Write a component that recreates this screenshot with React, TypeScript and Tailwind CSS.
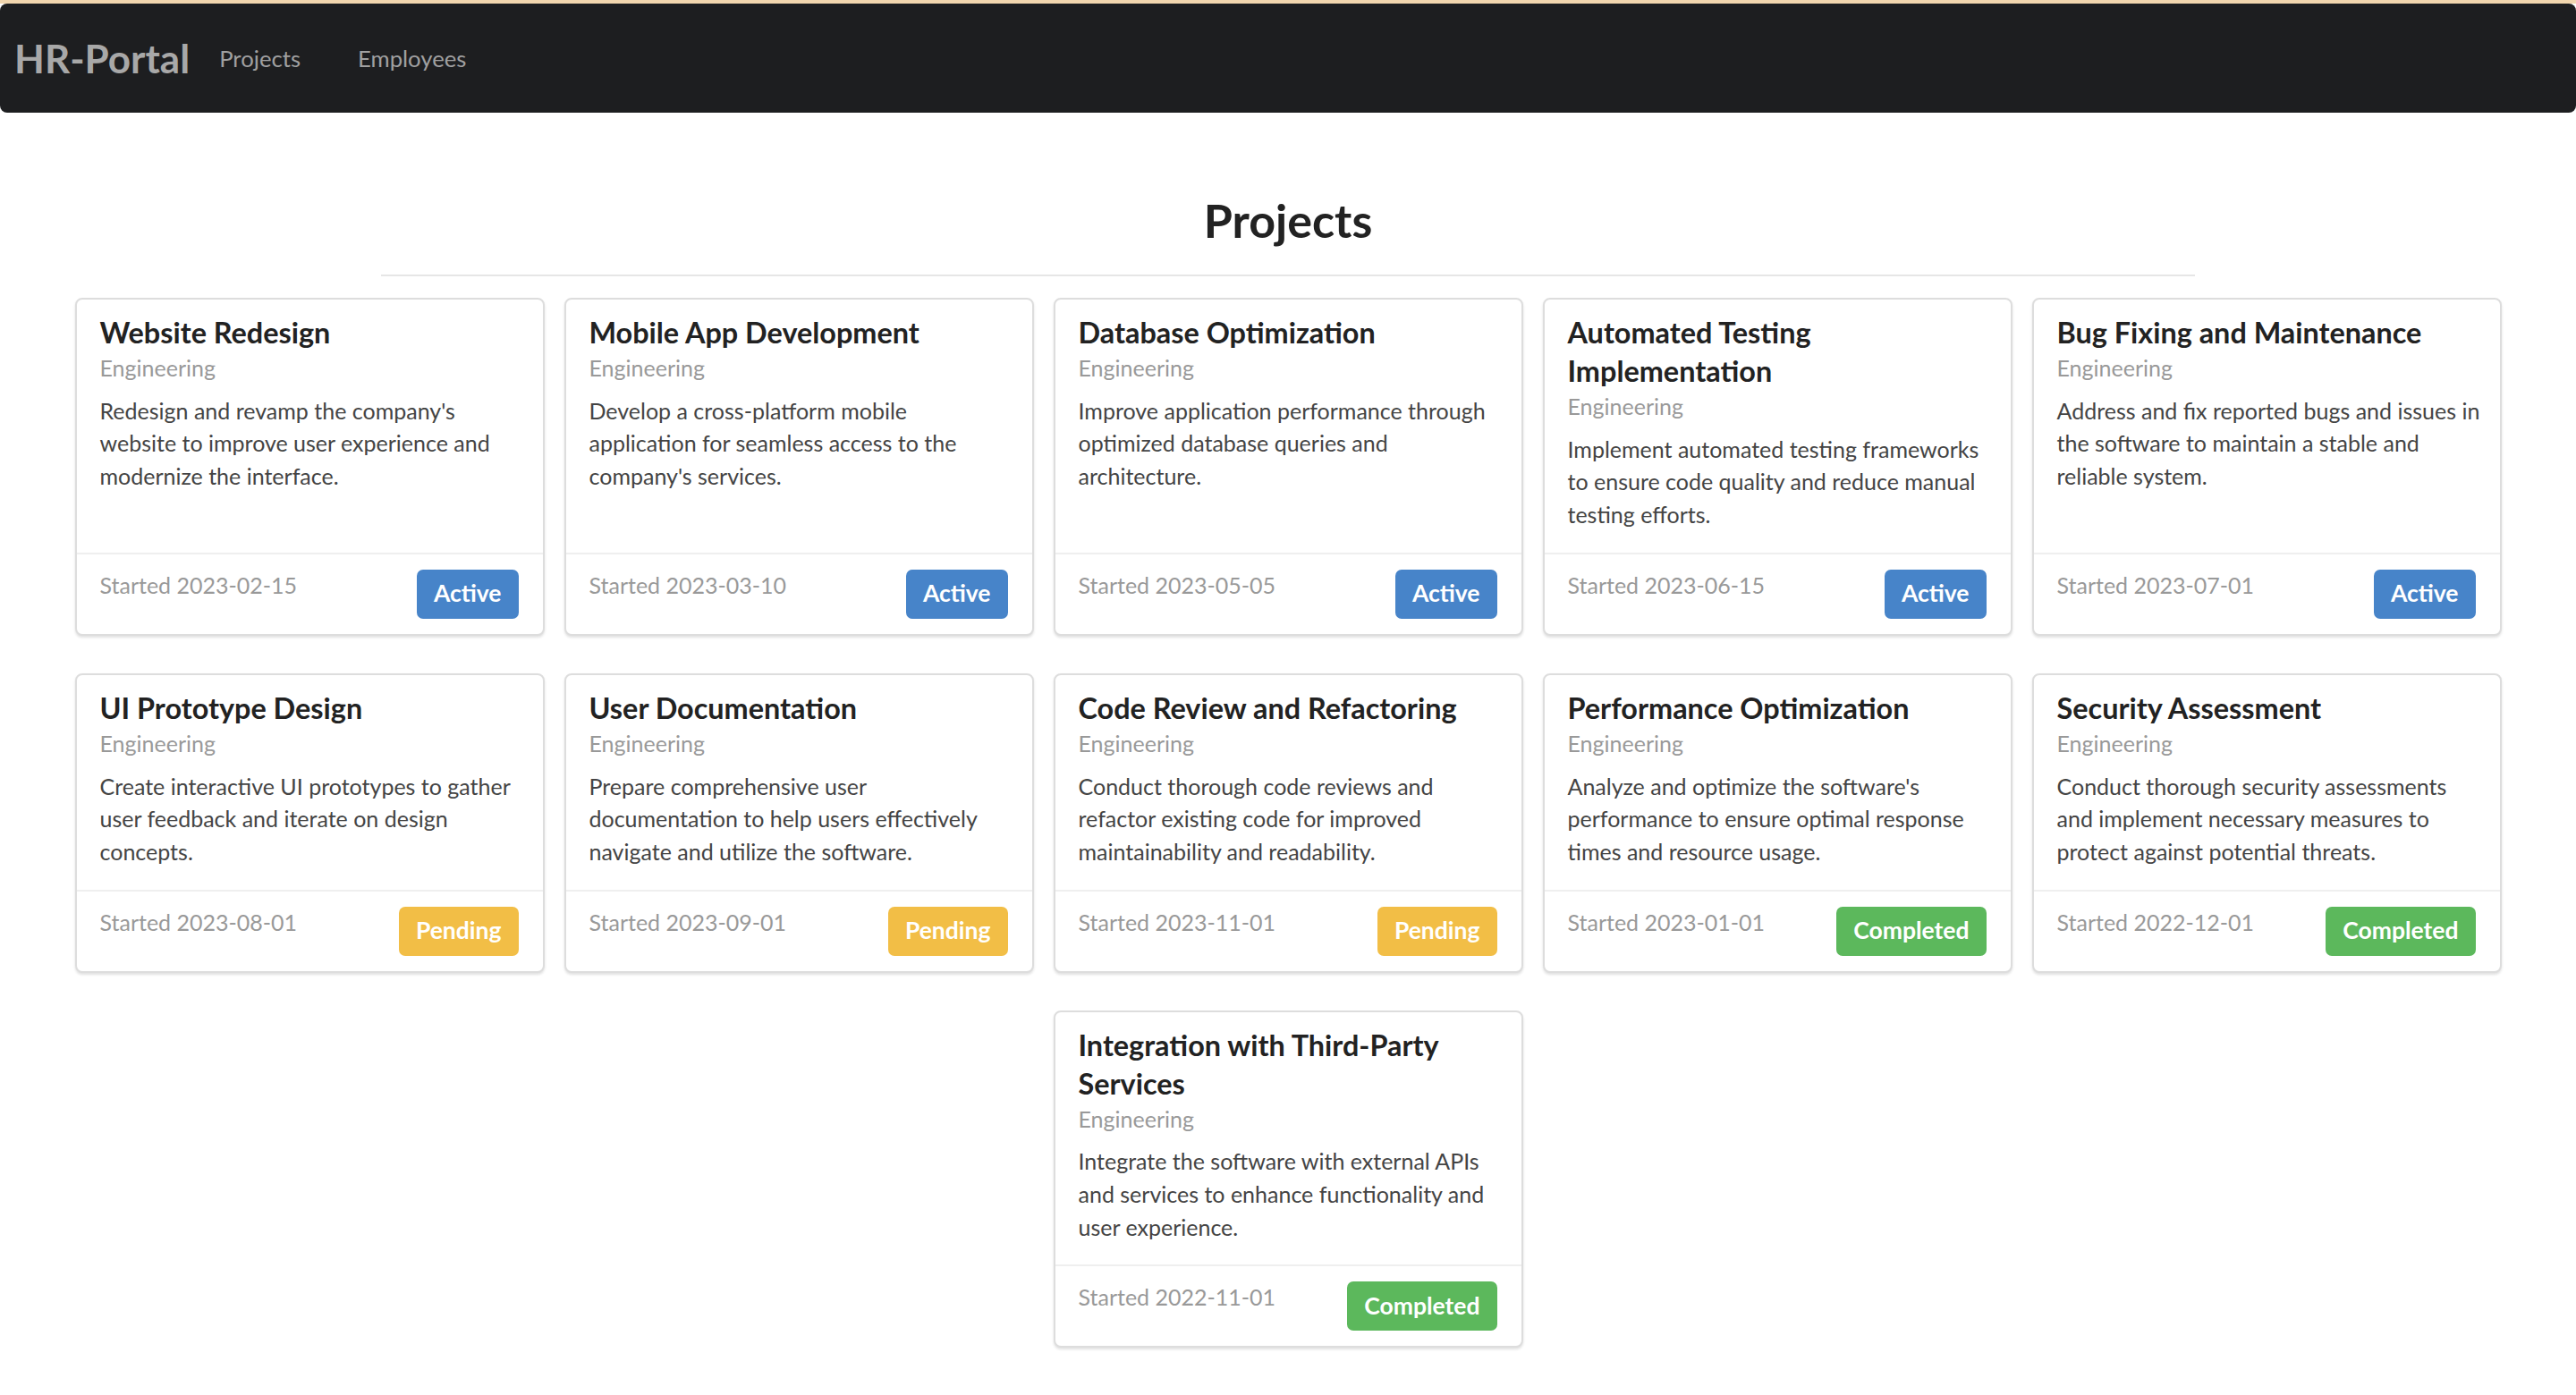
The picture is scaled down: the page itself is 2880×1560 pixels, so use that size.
const projects = [
  { title: "Website Redesign", desc: "Redesign and revamp the company's website to improve user experience and modernize the interface.", started: "2023-02-15", status: "Active" },
  { title: "Mobile App Development", desc: "Develop a cross-platform mobile application for seamless access to the company's services.", started: "2023-03-10", status: "Active" },
  { title: "Database Optimization", desc: "Improve application performance through optimized database queries and architecture.", started: "2023-05-05", status: "Active" },
  { title: "Automated Testing Implementation", desc: "Implement automated testing frameworks to ensure code quality and reduce manual testing efforts.", started: "2023-06-15", status: "Active" },
  { title: "Bug Fixing and Maintenance", desc: "Address and fix reported bugs and issues in the software to maintain a stable and reliable system.", started: "2023-07-01", status: "Active" },
  { title: "UI Prototype Design", desc: "Create interactive UI prototypes to gather user feedback and iterate on design concepts.", started: "2023-08-01", status: "Pending" },
  { title: "User Documentation", desc: "Prepare comprehensive user documentation to help users effectively navigate and utilize the software.", started: "2023-09-01", status: "Pending" },
  { title: "Code Review and Refactoring", desc: "Conduct thorough code reviews and refactor existing code for improved maintainability and readability.", started: "2023-11-01", status: "Pending" },
  { title: "Performance Optimization", desc: "Analyze and optimize the software's performance to ensure optimal response times and resource usage.", started: "2023-01-01", status: "Completed" },
  { title: "Security Assessment", desc: "Conduct thorough security assessments and implement necessary measures to protect against potential threats.", started: "2022-12-01", status: "Completed" },
  { title: "Integration with Third-Party Services", desc: "Integrate the software with external APIs and services to enhance functionality and user experience.", started: "2022-11-01", status: "Completed" },
];

const badgeColors: Record<string, string> = {
  Active: "bg-[#4784c9]",
  Pending: "bg-[#f2be46]",
  Completed: "bg-[#5cb85c]",
};

const ProjectCard = ({ project }: { project: (typeof projects)[number] }) => (
  <div className="flex w-[525px] flex-col rounded-[8px] border-2 border-[#dddddd] bg-white shadow-[0_2px_3px_rgba(0,0,0,0.12)]">
    <div className="flex-1 pt-[15px] pr-[20px] pb-[24px] pl-[26px]">
      <h4 className="text-[32.4px] leading-[43px] font-bold text-[#222]">{project.title}</h4>
      <div className="text-[25px] leading-[36.7px] text-[#999]">Engineering</div>
      <p className="mt-[11px] text-[25px] leading-[36.7px] text-[#444]">{project.desc}</p>
    </div>
    <div className="flex items-start justify-between border-t-2 border-[#efefef] px-[26px] py-[17px]">
      <span className="-mt-[1px] text-[25px] leading-[36.7px] text-[#999]">Started {project.started}</span>
      <span className={`${badgeColors[project.status]} mr-[1px] flex h-[55px] items-center rounded-[7px] px-[19px] text-[26.5px] font-bold text-white`}>
        {project.status}
      </span>
    </div>
  </div>
);

export default function App() {
  return (
    <div className="min-h-screen bg-white font-['Lato',_sans-serif]">
      <div className="h-[4px] bg-[#f1d6ae]" />
      <nav className="flex h-[122px] items-center rounded-[8px] bg-[#1d1e20] pl-[16px]">
        <span className="text-[44px] font-bold text-[#a8a8a8]">HR-Portal</span>
        <div className="ml-[1px] flex">
          <a className="px-[32px] text-[25.7px] text-[#a0a0a0]">Projects</a>
          <a className="px-[32px] text-[25.7px] text-[#a0a0a0]">Employees</a>
        </div>
      </nav>

      <h1 className="mt-[92px] text-center text-[52px] leading-[57px] font-bold text-[#222]">Projects</h1>
      <div className="mx-auto mt-[32px] h-[2px] w-[2028px] bg-[#e6e6e6]" />

      <div className="mx-auto mt-[24px] flex w-[2713px] flex-wrap justify-center gap-x-[22px] gap-y-[42px] pb-[40px]">
        {projects.map((p) => (
          <ProjectCard key={p.title} project={p} />
        ))}
      </div>
    </div>
  );
}
